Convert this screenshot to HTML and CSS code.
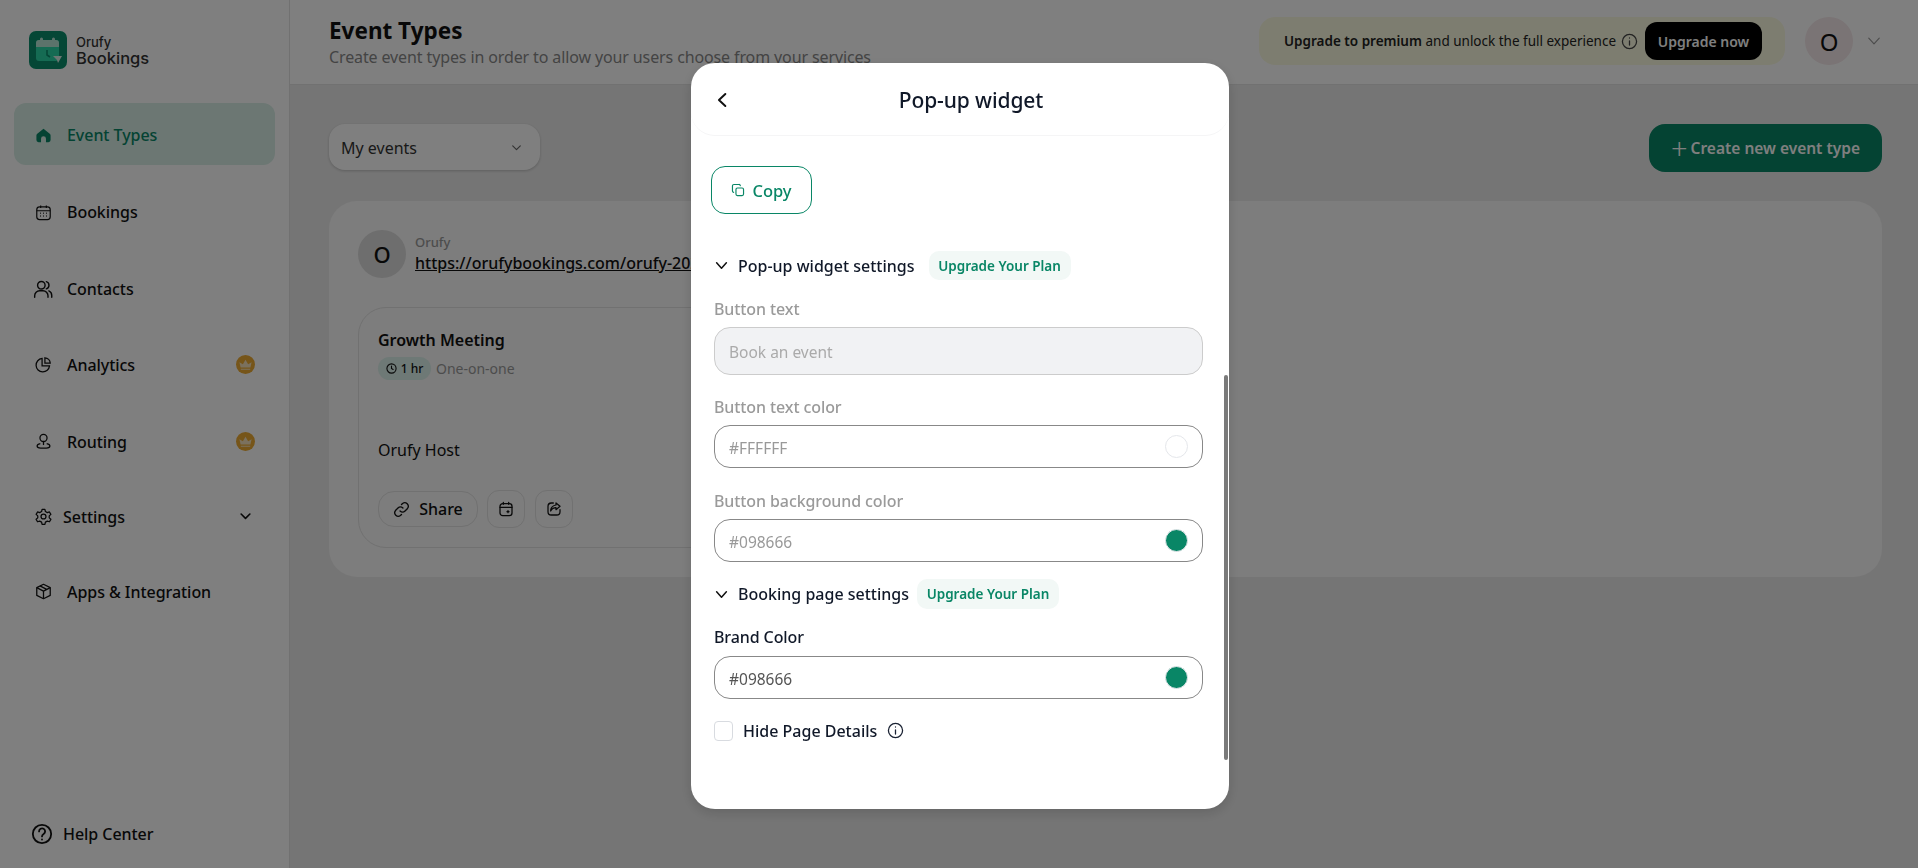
FILE: index.html
```html
<!DOCTYPE html>
<html lang="en">
<head>
    <meta charset="UTF-8">
    <meta name="viewport" content="width=device-width, initial-scale=1.0">
    <title>Event Types</title>
    <link rel="stylesheet" href="styles.css">
</head>
<body>
    <div class="app">
        <!-- Sidebar -->
        <aside class="sidebar">
            <div class="brand">
                <svg class="brand-logo" viewBox="0 0 38 38">
                    <rect width="38" height="38" rx="7" fill="#0a8f6d"/>
                    <rect x="7" y="9" width="23" height="21" rx="3" fill="#2bd6a6"/>
                    <path d="M7 16v-4a3 3 0 0 1 3-3h17a3 3 0 0 1 3 3v4z" fill="#b8e6d6"/>
                    <rect x="11" y="6.5" width="3" height="5" rx="1.5" fill="#b8e6d6"/>
                    <rect x="23" y="6.5" width="3" height="5" rx="1.5" fill="#b8e6d6"/>
                    <path d="M18 19v5l3 2" fill="none" stroke="#0a8f6d" stroke-width="1.6"/>
                    <path d="M24 25h9l-4 7-1-3z" fill="#d6efe6"/>
                </svg>
                <div class="brand-text">
                    <span class="brand-top">Orufy</span>
                    <span class="brand-name">Bookings</span>
                </div>
            </div>

            <nav class="side-nav">
                <a class="side-link active">
                    <svg class="side-icon" viewBox="0 0 24 24"><path d="M12 2.500 3.200 9.600A3 3 0 0 0 2 12v6.500a3 3 0 0 0 3 3h3.500v-5a3.500 3.500 0 0 1 7 0v5H19a3 3 0 0 0 3-3V12a3 3 0 0 0-1.200-2.400z" fill="#098666"/></svg>
                    Event Types
                </a>
                <a class="side-link">
                    <svg class="side-icon" viewBox="0 0 24 24" fill="none" stroke="#111" stroke-width="1.700"><rect x="2.500" y="4" width="19" height="18" rx="4"/><path d="M2.500 9.500h19M8 2v3.500M16 2v3.500"/><path d="M7.500 13h1M11.500 13h1M15.500 13h1M7.500 17h1M11.500 17h1M15.500 17h1" stroke-width="2"/></svg>
                    Bookings
                </a>
                <a class="side-link">
                    <svg class="side-icon side-icon-big" viewBox="0 0 24 24" fill="none" stroke="#111" stroke-width="1.700" stroke-linecap="round"><circle cx="10" cy="7.500" r="4.500"/><path d="M2 22v-2a6 6 0 0 1 6-6h4a6 6 0 0 1 6 6v2M16 3.200a4.500 4.500 0 0 1 0 8.600M19 14.300a6 6 0 0 1 3.500 5.500V22"/></svg>
                    Contacts
                </a>
                <a class="side-link side-link-low side-link-analytics">
                    <svg class="side-icon" viewBox="0 0 24 24" fill="none" stroke="#111" stroke-width="1.800"><path d="M10 3.500a9.500 9.500 0 1 0 10.500 10.500H10z"/><path d="M14 2.500a8 8 0 0 1 7.500 7.500H14z"/></svg>
                    Analytics
                    <span class="crown">
                        <svg viewBox="0 0 16 16"><path d="M3 12.500h10v1.200H3zM2.800 11.300 1.500 5.500l3.700 2.300L8 3l2.800 4.800 3.700-2.300-1.300 5.800z" fill="#f6e3bd"/></svg>
                    </span>
                </a>
                <a class="side-link side-link-low">
                    <svg class="side-icon" viewBox="0 0 24 24" fill="none" stroke="#111" stroke-width="1.800"><circle cx="12" cy="7" r="5"/><path d="M12 12v5"/><path d="M7.500 15C4.500 15.500 3 17 3 18.500 3 20.500 5 21.500 8 21.500h8c3 0 5-1 5-3 0-1.500-1.500-3-4.500-3.500"/></svg>
                    Routing
                    <span class="crown">
                        <svg viewBox="0 0 16 16"><path d="M3 12.500h10v1.200H3zM2.800 11.300 1.500 5.500l3.700 2.300L8 3l2.800 4.800 3.700-2.300-1.300 5.800z" fill="#f6e3bd"/></svg>
                    </span>
                </a>
                <a class="side-link side-link-low side-link-settings">
                    <svg class="side-icon" viewBox="0 0 24 24" fill="none" stroke="#111" stroke-width="1.800" stroke-linejoin="round"><circle cx="12" cy="12" r="3.500"/><path d="M10 2h4l.7 3 2.700 1.500 3-.9 2 3.400-2.300 2.100v2.800l2.300 2.100-2 3.400-3-.9-2.700 1.500-.7 3h-4l-.7-3-2.700-1.500-3 .9-2-3.400 2.300-2.100v-2.800L1.600 9l2-3.400 3 .9L9.300 5z"/></svg>
                    Settings
                    <svg class="side-chevron" viewBox="0 0 24 24" fill="none" stroke="#111" stroke-width="2.600" stroke-linecap="round" stroke-linejoin="round"><path d="m5 8 7 7 7-7"/></svg>
                </a>
                <a class="side-link side-link-low side-link-apps">
                    <svg class="side-icon" viewBox="0 0 24 24" fill="none" stroke="#111" stroke-width="1.800" stroke-linejoin="round"><path d="M12 1.800 21.500 6.500v11L12 22.200 2.500 17.500v-11z"/><path d="M2.500 6.500 12 11.500l9.500-5M12 11.500v10.700M7 4l9.500 5"/></svg>
                    Apps &amp; Integration
                </a>
            </nav>

            <a class="help-link">
                <svg class="help-icon" viewBox="0 0 24 24" fill="none" stroke="#111" stroke-width="2" stroke-linecap="round"><circle cx="12" cy="12" r="10"/><path d="M8.800 9.200a3.300 3.300 0 1 1 5 2.800c-1.200.8-1.800 1.300-1.800 2.600"/><path d="M12 18v.1"/></svg>
                Help Center
            </a>
        </aside>

        <!-- Main -->
        <div class="main">
            <header class="topbar">
                <div class="topbar-title">
                    <h1>Event Types</h1>
                    <p>Create event types in order to allow your users choose from your services</p>
                </div>
                <div class="upgrade-banner">
                    <span class="upgrade-text"><b>Upgrade to premium</b> and unlock the full experience</span>
                    <svg class="info-icon" viewBox="0 0 24 24" fill="none" stroke="#444" stroke-width="1.800" stroke-linecap="round"><circle cx="12" cy="12" r="10"/><path d="M12 11v6M12 7v.1"/></svg>
                    <button class="upgrade-button">Upgrade now</button>
                </div>
                <div class="user-avatar">O</div>
                <svg class="user-chevron" viewBox="0 0 24 24" fill="none" stroke="#999" stroke-width="2" stroke-linecap="round" stroke-linejoin="round"><path d="m3 7 9 10 9-10"/></svg>
            </header>

            <section class="content">
                <div class="toolbar">
                    <div class="event-select">
                        My events
                        <svg viewBox="0 0 24 24" fill="none" stroke="#666" stroke-width="2.200" stroke-linecap="round" stroke-linejoin="round"><path d="m5 9 7 7 7-7"/></svg>
                    </div>
                    <button class="create-button"><span class="create-plus">+</span>Create new event type</button>
                </div>

                <div class="events-card">
                    <div class="owner">
                        <div class="owner-avatar">O</div>
                        <div class="owner-text">
                            <span class="owner-name">Orufy</span>
                            <a class="owner-url">https://orufybookings.com/orufy-2024</a>
                        </div>
                    </div>

                    <article class="event">
                        <h2>Growth Meeting</h2>
                        <div class="event-meta">
                            <span class="duration">
                                <svg viewBox="0 0 24 24" fill="none" stroke="#111" stroke-width="2.400" stroke-linecap="round"><circle cx="12" cy="12" r="10"/><path d="M12 6.500V12l3.500 2"/></svg>
                                1 hr
                            </span>
                            <span class="event-kind">One-on-one</span>
                        </div>
                        <p class="event-host">Orufy Host</p>
                        <div class="event-actions">
                            <button class="share-button">
                                <svg viewBox="0 0 24 24" fill="none" stroke="#111" stroke-width="1.900" stroke-linecap="round"><path d="M10 14a5 5 0 0 0 7 0l3.500-3.500a5 5 0 0 0-7-7L12 5"/><path d="M14 10a5 5 0 0 0-7 0l-3.500 3.500a5 5 0 0 0 7 7L12 19"/></svg>
                                Share
                            </button>
                            <button class="icon-button">
                                <svg viewBox="0 0 24 24" fill="none" stroke="#111" stroke-width="1.900" stroke-linecap="round"><rect x="3" y="4" width="18" height="18" rx="4"/><path d="M3 9.500h18M8 2v3M16 2v3M13.500 16h3M15 14.500v3"/></svg>
                            </button>
                            <button class="icon-button">
                                <svg viewBox="0 0 24 24" fill="none" stroke="#111" stroke-width="1.900" stroke-linecap="round" stroke-linejoin="round"><path d="M11 3H8a5 5 0 0 0-5 5v8a5 5 0 0 0 5 5h8a5 5 0 0 0 5-5v-3"/><path d="M15 3l6 5-6 5V10c-3 0-6 1-8 5 0-5 3-8 8-9z"/></svg>
                            </button>
                        </div>
                    </article>
                </div>
            </section>
        </div>
    </div>

    <!-- Pop-up -->
    <div class="overlay">
        <div class="modal">
            <div class="modal-head">
                <svg class="modal-back" viewBox="0 0 24 24" fill="none" stroke="#111" stroke-width="2.800" stroke-linecap="round" stroke-linejoin="round"><path d="M16 3.500 7 12l9 8.500"/></svg>
                <h2>Pop-up widget</h2>
            </div>

            <div class="modal-body">
                <button class="copy-button">
                    <svg viewBox="0 0 24 24" fill="none" stroke="#098666" stroke-width="2" stroke-linecap="round"><rect x="8.500" y="8.500" width="13" height="13" rx="2.500"/><path d="M16 4.500A2.500 2.500 0 0 0 13.500 2.500H5A2.500 2.500 0 0 0 2.500 5v8.500A2.500 2.500 0 0 0 4.500 16"/></svg>
                    Copy
                </button>

                <div class="form">
                    <div class="section-head section-first">
                        <svg viewBox="0 0 24 24" fill="none" stroke="#111" stroke-width="2.800" stroke-linecap="round" stroke-linejoin="round"><path d="m3 7 9 10 9-10"/></svg>
                        <span class="section-title">Pop-up widget settings</span>
                        <span class="plan-badge">Upgrade Your Plan</span>
                    </div>

                    <label class="field-label disabled label-first">Button text</label>
                    <div class="input input-filled">Book an event</div>

                    <label class="field-label disabled label-after-filled">Button text color</label>
                    <div class="input">
                        #FFFFFF
                        <span class="swatch swatch-white"></span>
                    </div>

                    <label class="field-label disabled">Button background color</label>
                    <div class="input">
                        #098666
                        <span class="swatch"></span>
                    </div>

                    <div class="section-head section-second">
                        <svg viewBox="0 0 24 24" fill="none" stroke="#111" stroke-width="2.800" stroke-linecap="round" stroke-linejoin="round"><path d="m3 7 9 10 9-10"/></svg>
                        <span class="section-title">Booking page settings</span>
                        <span class="plan-badge">Upgrade Your Plan</span>
                    </div>

                    <label class="field-label label-brand">Brand Color</label>
                    <div class="input input-active">
                        #098666
                        <span class="swatch"></span>
                    </div>

                    <div class="check-row">
                        <span class="checkbox"></span>
                        <span class="check-text">Hide Page Details</span>
                        <svg viewBox="0 0 24 24" fill="none" stroke="#1a2233" stroke-width="1.800" stroke-linecap="round"><circle cx="12" cy="12" r="10"/><path d="M12 11v6M12 7v.1"/></svg>
                    </div>
                </div>
            </div>

            <div class="scroll-thumb"></div>
        </div>
    </div>
</body>
</html>
```

FILE: styles.css
```css
* {
    box-sizing: border-box;
}

body {
    margin: 0;
    height: 100vh;
    overflow: hidden;
    font-family: "Noto Sans", sans-serif;
    font-size: 16px;
    color: #111;
    background: #ebebeb;
}

button {
    font-family: inherit;
    border: 0;
    background: none;
    padding: 0;
}

.app {
    display: flex;
    height: 100vh;
}

/* Sidebar */
.sidebar {
    width: 290px;
    flex-shrink: 0;
    display: flex;
    flex-direction: column;
    background: #fff;
    border-right: 1px solid #e2e2e2;
    padding: 31px 14px 0;
}

.brand {
    display: flex;
    align-items: center;
    gap: 9px;
    padding-left: 15px;
    height: 38px;
}

.brand-logo {
    width: 38px;
    height: 38px;
}

.brand-text {
    display: flex;
    flex-direction: column;
    font-family: Inter, sans-serif;
    color: #333;
}

.brand-top {
    font-size: 13px;
    line-height: 16px;
    font-weight: 500;
}

.brand-name {
    font-size: 16.500px;
    line-height: 17px;
    font-weight: 500;
}

.side-nav {
    margin-top: 34px;
    display: flex;
    flex-direction: column;
    gap: 15px;
}

.side-link {
    display: flex;
    align-items: center;
    height: 62px;
    padding-left: 21px;
    border-radius: 12px;
    font-weight: 500;
    letter-spacing: -0.05px;
    color: #111;
}

.side-link-low {
    height: 61px;
}

.side-link-analytics {
    padding-bottom: 2px;
}

.side-link-settings {
    margin-top: -1px;
}

.side-link-apps {
    margin-top: -1px;
}

.side-link.active {
    margin-bottom: 1px;
    padding-top: 2px;
    background: #d8eee6;
    color: #098666;
}

.side-icon {
    width: 17px;
    height: 17px;
    margin-right: 15px;
    flex-shrink: 0;
}

.side-icon-big {
    width: 20px;
    height: 20px;
    margin-left: -2px;
    margin-right: 14px;
}

.side-link-settings .side-icon {
    margin-right: 11px;
}

.crown {
    margin-left: auto;
    margin-right: 20px;
    width: 19px;
    height: 19px;
    border-radius: 50%;
    background: #ecaa33;
    display: flex;
    align-items: center;
    justify-content: center;
}

.crown svg {
    width: 15px;
    height: 15px;
}

.side-chevron {
    margin-left: auto;
    margin-right: 22px;
    width: 15px;
    height: 15px;
}

.help-link {
    margin-top: auto;
    margin-bottom: 22px;
    display: flex;
    align-items: center;
    gap: 10px;
    padding-left: 17px;
    font-weight: 500;
    letter-spacing: -0.05px;
    height: 24px;
}

.help-icon {
    width: 22px;
    height: 22px;
}

/* Main */
.main {
    flex: 1;
    min-width: 0;
    display: flex;
    flex-direction: column;
}

.topbar {
    height: 85px;
    flex-shrink: 0;
    display: flex;
    align-items: flex-start;
    background: #fff;
    border-bottom: 1px solid #e2e2e2;
    padding: 15px 37px 0 40px;
}

.topbar-title {
    flex: 1;
    min-width: 0;
    padding-top: 2px;
}

.topbar-title h1 {
    margin: 0 0 0 -1px;
    font-size: 22.500px;
    line-height: 28px;
    font-weight: 700;
}

.topbar-title p {
    margin: 0 0 0 -1px;
    line-height: 24px;
    color: #888;
    letter-spacing: -0.12px;
    white-space: nowrap;
}

.upgrade-banner {
    display: flex;
    align-items: center;
    width: 526px;
    height: 48px;
    margin-top: 2px;
    padding: 0 23px 0 25px;
    border-radius: 16px;
    background: #fbfbe1;
    color: #222;
}

.upgrade-text {
    font-size: 13.500px;
    white-space: nowrap;
}

.upgrade-text b {
    font-weight: 600;
}

.info-icon {
    width: 17px;
    height: 17px;
    margin: 0 7px 0 auto;
}

.upgrade-button {
    width: 117px;
    height: 38px;
    flex-shrink: 0;
    border-radius: 12px;
    background: #000;
    color: #fff;
    font-size: 14px;
    font-weight: 600;
}

.user-avatar {
    width: 48px;
    height: 48px;
    margin: 2px 0 0 20px;
    flex-shrink: 0;
    border-radius: 50%;
    background: #f5e8ea;
    display: flex;
    align-items: center;
    justify-content: center;
    font-size: 24px;
}

.user-chevron {
    width: 14px;
    height: 14px;
    margin: 19px 0 0 14px;
    flex-shrink: 0;
}

.content {
    padding: 39px 36px 0 39px;
}

.toolbar {
    display: flex;
    align-items: flex-start;
    justify-content: space-between;
}

.event-select {
    width: 211px;
    height: 46px;
    display: flex;
    align-items: center;
    justify-content: space-between;
    padding: 1px 17px 0 12px;
    border-radius: 16px;
    background: #fff;
    box-shadow: 0 1px 3px rgba(0, 0, 0, 0.2);
    color: #333;
}

.event-select svg {
    width: 13px;
    height: 13px;
}

.create-button {
    width: 233px;
    height: 48px;
    border-radius: 16px;
    background: #098666;
    color: #fff;
    font-size: 15.500px;
    font-weight: 600;
    display: flex;
    align-items: center;
    justify-content: center;
    gap: 3px;
}

.create-plus {
    font-size: 29px;
    font-weight: 300;
    line-height: 26px;
}

.events-card {
    margin-top: 29px;
    height: 376px;
    padding: 29px 29px 0;
    border-radius: 28px;
    background: #fafafa;
}

.owner {
    display: flex;
    align-items: center;
    gap: 9px;
}

.owner-avatar {
    width: 48px;
    height: 48px;
    border-radius: 50%;
    background: #dcdcdc;
    display: flex;
    align-items: center;
    justify-content: center;
    font-size: 22px;
    font-weight: 500;
}

.owner-text {
    display: flex;
    flex-direction: column;
}

.owner-name {
    font-size: 13px;
    line-height: 18px;
    font-weight: 500;
    color: #999;
}

.owner-url {
    line-height: 24px;
    font-weight: 500;
    text-decoration: underline;
    white-space: nowrap;
}

.event {
    width: 600px;
    height: 241px;
    margin-top: 29px;
    padding: 20px 19px 0;
    border: 1px solid #e2e2e2;
    border-radius: 28px;
}

.event h2 {
    margin: 0;
    font-size: 16px;
    line-height: 24px;
    font-weight: 600;
}

.event-meta {
    display: flex;
    align-items: center;
    gap: 5px;
    margin-top: 5px;
}

.duration {
    width: 53px;
    height: 23px;
    display: flex;
    align-items: center;
    justify-content: center;
    gap: 4px;
    border-radius: 12px;
    background: #dcf2ec;
    font-size: 12px;
    font-weight: 500;
}

.duration svg {
    width: 11px;
    height: 11px;
}

.event-kind {
    font-size: 14px;
    color: #999;
}

.event-host {
    margin: 58px 0 0;
    line-height: 24px;
}

.event-actions {
    display: flex;
    align-items: center;
    gap: 9px;
    margin-top: 28px;
}

.share-button {
    width: 100px;
    height: 36px;
    display: flex;
    align-items: center;
    justify-content: center;
    gap: 9px;
    border: 1px solid #e2e2e2;
    border-radius: 16px;
    font-size: 16px;
    font-weight: 500;
    color: #111;
}

.share-button svg {
    width: 17px;
    height: 17px;
}

.icon-button {
    width: 38px;
    height: 38px;
    display: flex;
    align-items: center;
    justify-content: center;
    border: 1px solid #e2e2e2;
    border-radius: 12px;
}

.icon-button + .icon-button {
    margin-left: 1px;
}

.icon-button svg {
    width: 16px;
    height: 16px;
}

/* Pop-up */
.overlay {
    position: fixed;
    top: 0;
    left: 0;
    width: 100%;
    height: 100%;
    background: rgba(0, 0, 0, 0.5);
    display: flex;
    align-items: flex-start;
    justify-content: center;
    padding-top: 63px;
}

.modal {
    position: relative;
    width: 538px;
    height: 746px;
    margin-left: 2px;
    border-radius: 24px;
    background: #fff;
    box-shadow: 0 4px 12px rgba(0, 0, 0, 0.15);
    color: #101828;
}

.modal-head {
    position: relative;
    height: 73px;
    display: flex;
    align-items: center;
    justify-content: center;
    padding: 2px 0 0 22px;
    border-bottom: 1px solid #f5f5f6;
    border-radius: 24px;
}

.modal-head h2 {
    margin: 0;
    font-size: 21px;
    font-weight: 500;
    letter-spacing: -0.1px;
}

.modal-back {
    position: absolute;
    left: 23px;
    top: 28px;
    width: 17px;
    height: 18px;
}

.modal-body {
    padding: 30px 26px 0 20px;
}

.copy-button {
    width: 101px;
    height: 48px;
    display: flex;
    align-items: center;
    justify-content: center;
    gap: 7px;
    border: 1px solid #098666;
    border-radius: 14px;
    color: #098666;
    font-size: 16.500px;
    font-weight: 500;
}

.copy-button svg {
    width: 14px;
    height: 14px;
}

.form {
    display: flex;
    flex-direction: column;
    padding-left: 3px;
}

.section-head {
    display: flex;
    align-items: center;
    height: 29px;
}

.section-first {
    margin-top: 37px;
}

.section-second {
    margin-top: 17px;
    height: 30px;
}

.section-head svg {
    width: 13px;
    height: 13px;
    margin: 0 10px 0 1px;
}

.section-title {
    font-weight: 500;
    margin-right: 14px;
}

.section-second .section-title {
    margin-right: 8px;
}

.plan-badge {
    height: 100%;
    width: 142px;
    display: flex;
    align-items: center;
    justify-content: center;
    border-radius: 10px;
    background: #f2f8f6;
    color: #098666;
    font-size: 13.500px;
    font-weight: 600;
}

.field-label {
    display: block;
    margin-top: 21px;
    margin-bottom: 6px;
    line-height: 24px;
    font-size: 16px;
    font-weight: 500;
    letter-spacing: -0.1px;
}

.field-label.disabled {
    color: #9a9a9a;
}

.label-first {
    margin-top: 17px;
}

.label-after-filled {
    margin-top: 20px;
}

.label-brand {
    margin-top: 16px;
    margin-bottom: 7px;
}

.input {
    height: 43px;
    display: flex;
    align-items: center;
    justify-content: space-between;
    padding: 2px 14px 0 14px;
    border: 1px solid #888;
    border-radius: 16px;
    color: #999;
    font-size: 15.500px;
}

.input-filled {
    height: 48px;
    background: #f1f2f4;
    border-color: #ccc;
    color: #aaa;
}

.input-active {
    color: #555;
}

.swatch {
    width: 23px;
    height: 23px;
    margin-top: -3px;
    border-radius: 50%;
    background: #098666;
    border: 1px solid #e5e7eb;
}

.swatch-white {
    background: #fff;
}

.check-row {
    display: flex;
    align-items: center;
    margin-top: 22px;
    height: 20px;
}

.checkbox {
    width: 19px;
    height: 20px;
    border: 1px solid #d8dbe0;
    border-radius: 4px;
    margin-right: 10px;
}

.check-text {
    font-weight: 500;
}

.check-row svg {
    width: 17px;
    height: 17px;
    margin: -2px 0 0 10px;
}

.scroll-thumb {
    position: absolute;
    right: 1px;
    top: 312px;
    width: 4px;
    height: 385px;
    background: #7a7a7a;
    border-radius: 2px;
}
```
